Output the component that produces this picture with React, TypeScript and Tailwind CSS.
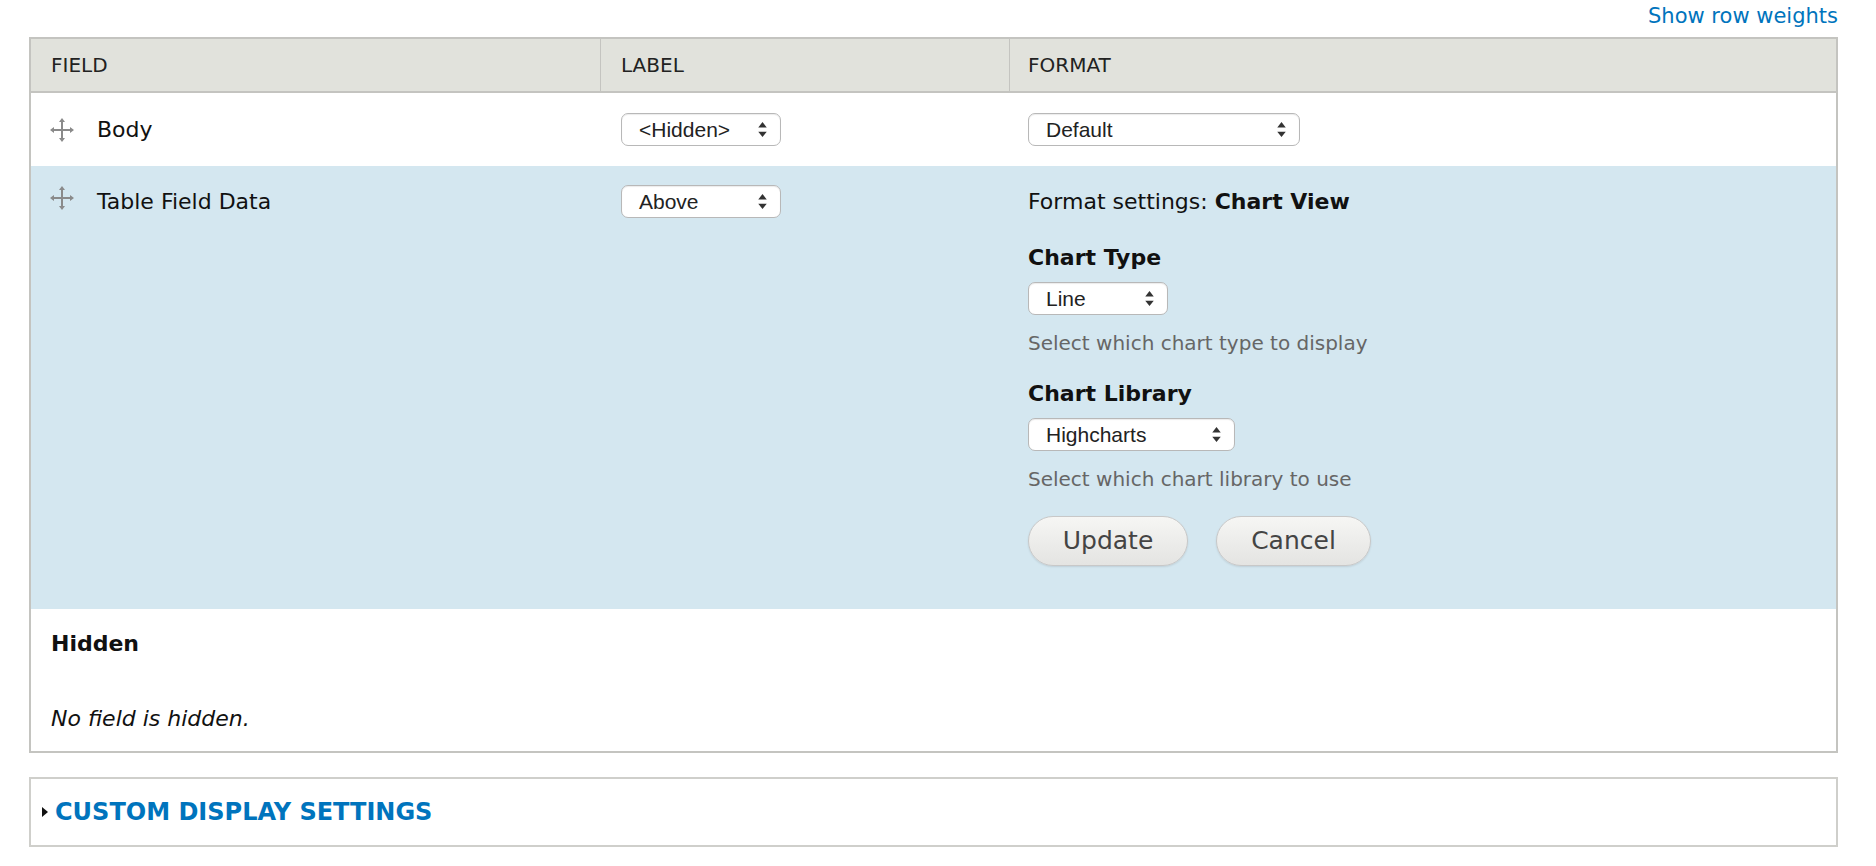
import React from "react";

const Arrows = () => (
  <svg width="11" height="17" viewBox="0 0 10 16" className="shrink-0">
    <path d="M5 1 L9 6 L1 6 Z M5 15 L9 10 L1 10 Z" fill="#333" />
  </svg>
);

const Select = ({ label, w }: { label: string; w: string }) => (
  <div
    className={`${w} h-[33px] flex items-center justify-between pl-[17px] pr-[12px] bg-white border border-[#b8b8b8] rounded-[7px] text-[21px] text-[#222] shadow-[inset_0_1px_1px_rgba(0,0,0,0.08)]`}
    style={{ fontFamily: "'Liberation Sans', Arial, sans-serif" }}
  >
    <span>{label}</span>
    <Arrows />
  </div>
);

const Drag = () => (
  <svg width="26" height="26" viewBox="0 0 26 26" className="shrink-0">
    <g fill="#8a8a8a">
      <rect x="12" y="3" width="2" height="20" />
      <rect x="3" y="12" width="20" height="2" />
      <path d="M13 1 L16 5 L10 5 Z M13 25 L16 21 L10 21 Z M1 13 L5 10 L5 16 Z M25 13 L21 10 L21 16 Z" />
    </g>
  </svg>
);

const Btn = ({ label, w }: { label: string; w: string }) => (
  <div className={`${w} h-[50px] flex items-center justify-center rounded-full border border-[#c8c8c8] bg-gradient-to-b from-[#f6f6f4] to-[#e4e4e2] text-[25px] text-[#444] shadow-[0_1px_2px_rgba(0,0,0,0.1)]`}>
    {label}
  </div>
);

export default function App() {
  return (
    <div className="w-[1876px] h-[866px] bg-white text-[#111]" style={{ fontFamily: "'DejaVu Sans', Verdana, sans-serif" }}>
      <div className="pl-[29px] pr-[38px]">
        <div className="h-[37px] flex justify-end items-start pt-[1px]">
          <span className="text-[#0074bd] text-[21px]">Show row weights</span>
        </div>
        <div className="border-2 border-[#c4c4c0]">
          <div className="grid grid-cols-[570px_409px_1fr] h-[54px] bg-[#e1e2dc] border-b-2 border-[#c4c4c0] text-[20px] text-[#222]">
            <div className="flex items-center pl-[20px] border-r border-[#c4c4c0]">FIELD</div>
            <div className="flex items-center pl-[20px] border-r border-[#c4c4c0]">LABEL</div>
            <div className="flex items-center pl-[18px]">FORMAT</div>
          </div>
          <div className="grid grid-cols-[570px_409px_1fr] h-[73px] items-center text-[22px]">
            <div className="flex items-center gap-[22px] pl-[18px]"><Drag /><span>Body</span></div>
            <div className="pl-[20px]"><Select label="<Hidden>" w="w-[160px]" /></div>
            <div className="pl-[18px]"><Select label="Default" w="w-[272px]" /></div>
          </div>
          <div className="grid grid-cols-[570px_409px_1fr] bg-[#d4e7f0] h-[443px] pt-[19px] text-[22px]">
            <div className="flex items-start gap-[22px] pl-[18px]"><Drag /><span className="leading-[34px]">Table Field Data</span></div>
            <div className="pl-[20px]"><Select label="Above" w="w-[160px]" /></div>
            <div className="pl-[18px] flex flex-col items-start">
              <div className="leading-[34px]">Format settings: <b>Chart View</b></div>
              <div className="mt-[25px] font-bold leading-[28px]">Chart Type</div>
              <div className="mt-[10px]"><Select label="Line" w="w-[140px]" /></div>
              <div className="mt-[13px] text-[20px] text-[#666]">Select which chart type to display</div>
              <div className="mt-[22px] font-bold leading-[28px]">Chart Library</div>
              <div className="mt-[10px]"><Select label="Highcharts" w="w-[207px]" /></div>
              <div className="mt-[13px] text-[20px] text-[#666]">Select which chart library to use</div>
              <div className="mt-[22px] flex gap-[28px]">
                <Btn label="Update" w="w-[160px]" />
                <Btn label="Cancel" w="w-[155px]" />
              </div>
            </div>
          </div>
          <div className="h-[142px] pl-[20px] text-[22px]">
            <div className="pt-[18px] font-bold">Hidden</div>
            <div className="mt-[42px] italic">No field is hidden.</div>
          </div>
        </div>
        <div className="mt-[24px] h-[70px] border-2 border-[#cfcfcb] flex items-center pl-[10px] gap-[6px]">
          <svg width="8" height="12" viewBox="0 0 8 12"><path d="M1 1 L7 6 L1 11 Z" fill="#111" /></svg>
          <span className="text-[#0074bd] font-bold text-[24px]">CUSTOM DISPLAY SETTINGS</span>
        </div>
      </div>
    </div>
  );
}
